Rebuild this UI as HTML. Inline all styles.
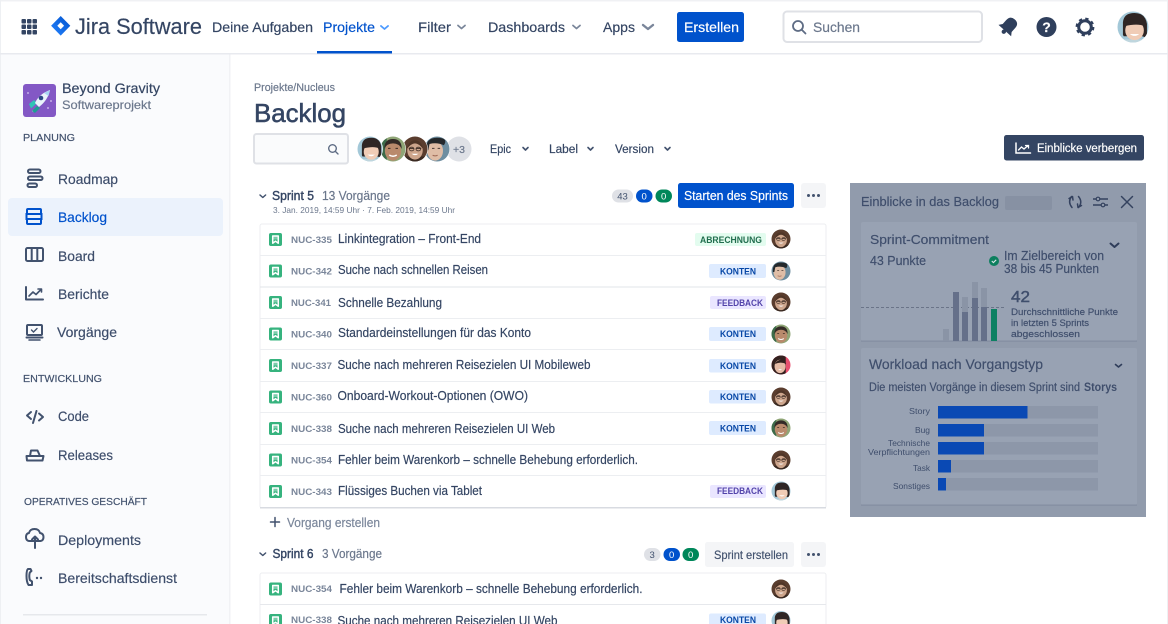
<!DOCTYPE html>
<html lang="de"><head><meta charset="utf-8"><title>Backlog</title>
<style>
html,body{margin:0;padding:0;background:#fff;width:1168px;height:624px;overflow:hidden}
svg{display:block;filter:blur(.25px)}
text{font-family:"Liberation Sans",sans-serif;fill:#344563;stroke:#344563;stroke-width:.18px;white-space:pre}
.n{font-size:14px}
.nv{font-size:14px;fill:#3d4d6b;stroke:#3d4d6b}
.h{font-size:10.5px;fill:#42526e;stroke:#42526e}
.g{fill:#6b778c;stroke:#6b778c}
.k{font-size:9.5px;font-weight:bold;fill:#7a869a;stroke:none}
.t{font-size:12.5px}
.l{font-size:9.5px;font-weight:bold;text-anchor:middle;stroke:none}
.w{fill:#fff;stroke:#fff}
.bl{fill:#0052cc;stroke:#0052cc}
.s{fill:none;stroke:#42526e;stroke-width:2;stroke-linecap:round;stroke-linejoin:round}
.ch{fill:none;stroke:#42526e;stroke-width:1.6;stroke-linecap:round;stroke-linejoin:round}
.p{fill:#3f4e6c;stroke:#3f4e6c}
.ps{font-size:8.5px;text-anchor:end;fill:#3f4e6c;stroke:none}
.b{font-size:9.5px;text-anchor:middle;stroke:none}
.bd{fill:#42526e}
.lg{fill:#0747a6}
.lf{fill:#5243aa}
.lh{fill:#216e4e}
</style></head><body>
<svg width="1168" height="624" viewBox="0 0 1168 624" xmlns="http://www.w3.org/2000/svg">
<defs>
<linearGradient id="jl" x1="0" y1="1" x2="1" y2="0"><stop offset="0" stop-color="#2684ff"/><stop offset="1" stop-color="#0052cc"/></linearGradient>
<clipPath id="cc"><circle cx="0" cy="0" r="10"/></clipPath>
<symbol id="aw" viewBox="-10 -10 20 20" overflow="visible"><g clip-path="url(#cc)"><rect x="-10" y="-10" width="20" height="20" fill="#5a3d2e"/><path d="M-10 6H10V10H-10Z" fill="#3a2a22"/><ellipse cx="0" cy="1" rx="6.200" ry="7.500" fill="#cda58c"/><path d="M-6.500 0Q-5-7 0-7T6.500 0Q3-4.500 0-4.500T-6.500 0Z" fill="#4f3527"/><path d="M-5 -.5H-1M1-.5H5" stroke="#3a2a22" stroke-width=".8"/><ellipse cx="-2.700" cy="0" rx="1.900" ry="1.500" fill="none" stroke="#3a2a22" stroke-width=".6"/><ellipse cx="2.700" cy="0" rx="1.900" ry="1.500" fill="none" stroke="#3a2a22" stroke-width=".6"/><path d="M-2.800 3.800Q0 6 2.800 3.800Z" fill="#fff"/></g></symbol>
<symbol id="am" viewBox="-10 -10 20 20" overflow="visible"><g clip-path="url(#cc)"><rect x="-10" y="-10" width="20" height="20" fill="#6e8ea0"/><ellipse cx="-1.500" cy="1.500" rx="6.300" ry="7.800" fill="#dfbda6"/><path d="M-8.500 1Q-9.500-9 0-9T5.500-3Q0-5.500-6-4L-7 1Z" fill="#24282b"/><path d="M-4-.5H-2M.5-.5H2.500" stroke="#4a3a34" stroke-width=".8"/><path d="M-3.500 5Q-1.500 6 .5 5" stroke="#a06c58" stroke-width=".8" fill="none"/></g></symbol>
<symbol id="ag" viewBox="-10 -10 20 20" overflow="visible"><g clip-path="url(#cc)"><rect x="-10" y="-10" width="20" height="20" fill="#8fa576"/><path d="M-10-10H-5V10H-10Z" fill="#3d6b4a"/><ellipse cx="0" cy="1.500" rx="6.500" ry="7.800" fill="#b98a6c"/><path d="M-7 0Q-7-8 0-8T7 0Q5-4.500 0-4.500T-7 0Z" fill="#332a26"/><path d="M-4-.5H-2M2-.5H4" stroke="#3a2a22" stroke-width=".8"/><path d="M-3 4.800Q0 6.800 3 4.800" stroke="#fff" stroke-width="1.100" fill="none"/></g></symbol>
<symbol id="ap" viewBox="-10 -10 20 20" overflow="visible"><g clip-path="url(#cc)"><rect x="-10" y="-10" width="20" height="20" fill="#e8506f"/><path d="M-10-10H5V10H-10Z" fill="#33211f"/><ellipse cx="-1" cy="1.500" rx="5.800" ry="7" fill="#e6bba6"/><path d="M-6.500-1Q-4-6 3-6L5.500-1Q0-4-6.500-1Z" fill="#33211f"/><path d="M-3 4.500Q-1 6.500 1 4.500Z" fill="#fff"/></g></symbol>
<symbol id="ab" viewBox="-10 -10 20 20" overflow="visible"><g clip-path="url(#cc)"><rect x="-10" y="-10" width="20" height="20" fill="#a3c8d8"/><path d="M-6.500 5V-3Q-6-9 1-9T9-2V7L6 6H-6Z" fill="#2f2625"/><path d="M-10 8H10V10H-10Z" fill="#bfd6de"/><ellipse cx="1" cy="2.200" rx="6" ry="6.300" fill="#f0ccb6"/><path d="M-5.500-.5Q-4-5 1.500-5T7.500-.5Q3-2.500-5.500-.5Z" fill="#2f2625"/><path d="M-2 4.500Q1 7 4 4.500Z" fill="#fff"/></g></symbol>
<symbol id="st" viewBox="0 0 14 14"><rect width="14" height="14" rx="2" fill="#36b37e"/><path d="M4 3.200H10V11L7 8.800 4 11Z" fill="none" stroke="#fff" stroke-width="1.600" stroke-linejoin="round"/><path d="M4 3H10V7H4Z" fill="#fff" opacity=".35"/></symbol>
<symbol id="dots" viewBox="0 0 25 25"><rect width="25" height="25" rx="3" fill="#f4f5f7"/><circle cx="7.500" cy="12.500" r="1.500" fill="#42526e"/><circle cx="12.500" cy="12.500" r="1.500" fill="#42526e"/><circle cx="17.500" cy="12.500" r="1.500" fill="#42526e"/></symbol>
</defs>

<rect width="1168" height="624" fill="#fff"/>
<rect x="0" y="0" width="1168" height="1.500" fill="#f0f1f4"/>
<rect x="0" y="0" width="1" height="624" fill="#eef0f3"/>
<rect x="1167" y="0" width="1" height="624" fill="#eef0f3"/>

<!-- Sidebar -->
<rect x="1" y="54" width="228" height="570" fill="#fafbfd"/>
<rect x="229" y="54" width="1.500" height="570" fill="#f1f2f5"/>
<rect x="0" y="53" width="1168" height="1.500" fill="#e8eaef"/>

<!-- Header -->
<g fill="#344563">
<rect x="21.500" y="19" width="4.500" height="4.500" rx="1"/><rect x="27" y="19" width="4.500" height="4.500" rx="1"/><rect x="32.500" y="19" width="4.500" height="4.500" rx="1"/>
<rect x="21.500" y="24.500" width="4.500" height="4.500" rx="1"/><rect x="27" y="24.500" width="4.500" height="4.500" rx="1"/><rect x="32.500" y="24.500" width="4.500" height="4.500" rx="1"/>
<rect x="21.500" y="30" width="4.500" height="4.500" rx="1"/><rect x="27" y="30" width="4.500" height="4.500" rx="1"/><rect x="32.500" y="30" width="4.500" height="4.500" rx="1"/>
</g>
<path d="M60.700 16L70.300 25.800 60.700 35.600 51.100 25.800Z" fill="url(#jl)"/>
<path d="M60.700 22.300L64.100 25.800 60.700 29.300 57.300 25.800Z" fill="#fff"/>
<text x="75" y="34" font-size="22" textLength="127" lengthAdjust="spacingAndGlyphs">Jira Software</text>
<text class="n" x="212" y="32" textLength="101" lengthAdjust="spacingAndGlyphs">Deine Aufgaben</text>
<text class="n bl" x="323" y="32" textLength="52" lengthAdjust="spacingAndGlyphs">Projekte</text>
<path d="M381 26l3.500 3 3.500-3" fill="none" stroke="#4c9aff" stroke-width="1.800" stroke-linecap="round" stroke-linejoin="round"/>
<rect x="317" y="51" width="75" height="2.500" fill="#0052cc"/>
<text class="n" x="418" y="32" textLength="33" lengthAdjust="spacingAndGlyphs">Filter</text>
<path d="M458 25.500l3.500 3 3.500-3" fill="none" stroke="#7a869a" stroke-width="1.800" stroke-linecap="round" stroke-linejoin="round"/>
<text class="n" x="488" y="32" textLength="77" lengthAdjust="spacingAndGlyphs">Dashboards</text>
<path d="M573 25.500l3.500 3 3.500-3" fill="none" stroke="#7a869a" stroke-width="1.800" stroke-linecap="round" stroke-linejoin="round"/>
<text class="n" x="603" y="32" textLength="32" lengthAdjust="spacingAndGlyphs">Apps</text>
<path d="M643 25l5 4 5-4" fill="none" stroke="#7a869a" stroke-width="2.400" stroke-linecap="round" stroke-linejoin="round"/>
<rect x="677" y="12" width="67" height="30" rx="2.500" fill="#0052cc"/>
<text class="n w" x="684" y="32" textLength="55" lengthAdjust="spacingAndGlyphs">Erstellen</text>
<rect x="783.500" y="11.500" width="198.500" height="30.500" rx="3.500" fill="#fff" stroke="#dfe1e6" stroke-width="2"/>
<circle cx="798" cy="26" r="5" fill="none" stroke="#5e6c84" stroke-width="1.800"/><path d="M802 30l3.500 3.500" stroke="#5e6c84" stroke-width="1.800" stroke-linecap="round"/>
<text class="n g" x="813" y="32" textLength="47" lengthAdjust="spacingAndGlyphs">Suchen</text>
<!-- bell -->
<g transform="rotate(42 1008.500 26.500)" fill="#2f3f5c"><path d="M1008.500 17Q1014.500 17 1014.500 23.500V28.500L1017 32H1000L1002.500 28.500V23.500Q1002.500 17 1008.500 17Z"/><circle cx="1008.500" cy="33.500" r="2.200"/></g>
<circle cx="1046.500" cy="27" r="10" fill="#2f3f5c"/>
<text class="w" x="1046.500" y="32" font-size="14" font-weight="bold" text-anchor="middle">?</text>
<circle cx="1085" cy="27" r="6.300" fill="none" stroke="#2f3f5c" stroke-width="3"/>
<circle cx="1085" cy="27" r="8.300" fill="none" stroke="#2f3f5c" stroke-width="2.200" stroke-dasharray="3.300 3.220"/>
<use href="#ab" x="1117.500" y="11.500" width="31" height="31"/>

<!-- Sidebar content -->
<rect x="23" y="84" width="33" height="33" rx="3" fill="#8358c5"/>
<g fill="#d9c8f2"><circle cx="28" cy="93" r=".9"/><circle cx="48" cy="108" r=".9"/><circle cx="33" cy="111" r=".9"/><circle cx="51" cy="101" r=".9"/></g>
<path d="M29 104l5-4 3 3-6 5.500z" fill="#2ec4b6"/><path d="M32 111l5-5 3 2-5 5z" fill="#1d9c93"/>
<path d="M35 103Q39 94 50 90 48 100 39 107Z" fill="#e9f3fb"/>
<path d="M44 93L50 90 48.500 96Z" fill="#a8d5f2"/>
<circle cx="41" cy="98" r="2.300" fill="#2d4a86"/>
<text x="62" y="93" font-size="14" textLength="98" lengthAdjust="spacingAndGlyphs">Beyond Gravity</text>
<text x="62" y="109" font-size="12" textLength="89" lengthAdjust="spacingAndGlyphs" class="g">Softwareprojekt</text>
<text class="h" x="23" y="141" textLength="52" lengthAdjust="spacingAndGlyphs">PLANUNG</text>

<rect x="8" y="198" width="215" height="38" rx="4" fill="#ebf2fc"/>
<!-- roadmap -->
<g class="s"><rect x="28" y="169.500" width="12.500" height="3.500" rx="1.750"/><rect x="28" y="176.500" width="14.500" height="3.500" rx="1.750"/><rect x="27.500" y="183.500" width="9.500" height="3.500" rx="1.750"/></g>
<text class="nv" x="58" y="184" textLength="60" lengthAdjust="spacingAndGlyphs">Roadmap</text>
<!-- backlog -->
<g fill="none" stroke="#0052cc" stroke-width="2"><rect x="27" y="209" width="14" height="5" rx="1"/><rect x="26.500" y="214" width="15" height="5"/><rect x="27" y="219" width="14" height="5" rx="1"/></g>
<text class="n bl" x="58" y="222" textLength="49" lengthAdjust="spacingAndGlyphs">Backlog</text>
<!-- board -->
<g fill="none" stroke="#42526e" stroke-width="2"><rect x="26" y="248" width="17" height="13" rx="1.500"/><path d="M31.700 248V261M37.300 248V261"/></g>
<text class="nv" x="58" y="261" textLength="37" lengthAdjust="spacingAndGlyphs">Board</text>
<!-- berichte -->
<path class="s" d="M26 287V299.500H43"/><path d="M29 296l4-4 3 2.500 5-5M38 289h3.500v3" fill="none" stroke="#42526e" stroke-width="1.600" stroke-linecap="round" stroke-linejoin="round"/>
<text class="nv" x="58" y="299" textLength="51" lengthAdjust="spacingAndGlyphs">Berichte</text>
<!-- vorgaenge -->
<g fill="none" stroke="#42526e" stroke-width="2" stroke-linecap="round"><rect x="27" y="325" width="15" height="10" rx="1"/><path d="M26.500 337.500H42.500"/></g><path d="M29 340H40" stroke="#42526e" stroke-width="1.500" stroke-linecap="round"/><path d="M31.500 330l2 2 3.500-3.500" fill="none" stroke="#42526e" stroke-width="1.400" stroke-linecap="round"/>
<text class="nv" x="57" y="337" textLength="60" lengthAdjust="spacingAndGlyphs">Vorgänge</text>
<text class="h" x="23" y="382" textLength="79" lengthAdjust="spacingAndGlyphs">ENTWICKLUNG</text>
<!-- code -->
<path class="s" d="M31 412l-4 3.500 4 3.500M39 413.500l4 3.500-4 3.500M36.500 411l-3.500 12"/>
<text class="nv" x="58" y="421" textLength="31" lengthAdjust="spacingAndGlyphs">Code</text>
<!-- releases -->
<path class="s" d="M26.500 456H43.500L42.500 460.500H27ZM30 456L31 450.500H37.500L40 456"/>
<text class="nv" x="58" y="460" textLength="55" lengthAdjust="spacingAndGlyphs">Releases</text>
<text class="h" x="24" y="505" textLength="123" lengthAdjust="spacingAndGlyphs">OPERATIVES GESCHÄFT</text>
<!-- deployments -->
<path class="s" d="M29.500 541H29Q26 540.500 26 537T29 533Q30 529 34.500 529T40 533Q43.500 533.500 43.500 537T40.500 541Z"/><path d="M35 548V536.500M32 539.500l3-3 3 3" fill="none" stroke="#42526e" stroke-width="2" stroke-linecap="round" stroke-linejoin="round"/>
<text class="nv" x="58" y="545" textLength="83" lengthAdjust="spacingAndGlyphs">Deployments</text>
<!-- bereitschaftsdienst -->
<path class="s" d="M30.500 569H28Q26.500 570 26.500 576T28.500 585H32V581.500L29.800 580Q28.800 576 29.800 572.500L31.500 571Z"/><circle cx="37" cy="578" r="1.200" fill="#42526e"/><circle cx="41" cy="578" r="1.200" fill="#42526e"/>
<text class="nv" x="58" y="583" textLength="119" lengthAdjust="spacingAndGlyphs">Bereitschaftsdienst</text>
<rect x="23" y="614" width="184" height="1.500" fill="#e6e8ec"/>

<!-- Main head -->
<text x="254" y="91" font-size="11" textLength="81" lengthAdjust="spacingAndGlyphs" class="g">Projekte/Nucleus</text>
<text x="254" y="122" font-size="26" textLength="92" lengthAdjust="spacingAndGlyphs" style="stroke-width:.55px">Backlog</text>
<rect x="254" y="134" width="94" height="29.500" rx="2.500" fill="#fafbfc" stroke="#dfe1e6" stroke-width="2"/>
<circle cx="332.500" cy="148.500" r="3.800" fill="none" stroke="#5e6c84" stroke-width="1.400"/><path d="M335.500 151.500l2.500 2.500" stroke="#5e6c84" stroke-width="1.400" stroke-linecap="round"/>

<circle cx="459" cy="149" r="12.500" fill="#dfe1e6"/>
<text x="459" y="153" font-size="10.500" text-anchor="middle" class="g">+3</text>
<circle cx="437" cy="149" r="13" fill="#fff"/><use href="#am" x="424.500" y="136.500" width="25" height="25"/>
<circle cx="415" cy="149" r="13" fill="#fff"/><use href="#aw" x="402.500" y="136.500" width="25" height="25"/>
<circle cx="393" cy="149" r="13" fill="#fff"/><use href="#ag" x="380.500" y="136.500" width="25" height="25"/>
<circle cx="370" cy="149" r="13" fill="#fff"/><use href="#ab" x="357.500" y="136.500" width="25" height="25"/>

<text x="490" y="153" font-size="11.500" textLength="21" lengthAdjust="spacingAndGlyphs">Epic</text>
<path class="ch" d="M523 147.500l2.500 2.500 2.500-2.500"/>
<text x="549" y="153" font-size="11.500" textLength="29" lengthAdjust="spacingAndGlyphs">Label</text>
<path class="ch" d="M588 147.500l2.500 2.500 2.500-2.500"/>
<text x="615" y="153" font-size="11.500" textLength="39" lengthAdjust="spacingAndGlyphs">Version</text>
<path class="ch" d="M665 147.500l2.500 2.500 2.500-2.500"/>

<rect x="1004" y="135" width="140" height="25.500" rx="2.500" fill="#344563"/>
<path d="M1016 143V153H1030.500" fill="none" stroke="#fff" stroke-width="1.500" stroke-linecap="round"/>
<path d="M1018.500 150l3-3 2.500 2 4-3.500M1025.500 145.500h3v2.500" fill="none" stroke="#fff" stroke-width="1.300" stroke-linecap="round"/>
<text class="w" x="1037" y="152" font-size="11.500" textLength="100" lengthAdjust="spacingAndGlyphs">Einblicke verbergen</text>

<!-- Sprint 5 head -->
<path d="M260 195l2.800 2.500 2.800-2.500" fill="none" stroke="#42526e" stroke-width="1.500" stroke-linecap="round" stroke-linejoin="round"/>
<text x="272" y="200" font-size="12.500" textLength="42" lengthAdjust="spacingAndGlyphs" style="stroke-width:.4px">Sprint 5</text>
<text x="322" y="200" font-size="12.500" textLength="68" lengthAdjust="spacingAndGlyphs" class="g">13 Vorgänge</text>
<text x="273" y="213" font-size="8.500" textLength="182" lengthAdjust="spacingAndGlyphs" class="g" style="stroke-width:0">3. Jan. 2019, 14:59 Uhr · 7. Feb. 2019, 14:59 Uhr</text>
<rect x="612" y="189.500" width="21" height="13" rx="6.500" fill="#dfe1e6"/><text class="b bd" x="622.500" y="199.500">43</text>
<rect x="636" y="189.500" width="16.500" height="13" rx="6.500" fill="#0052cc"/><text class="b" x="644.200" y="199.500" style="fill:#fff">0</text>
<rect x="655.500" y="189.500" width="16.500" height="13" rx="6.500" fill="#00875a"/><text class="b" x="663.700" y="199.500" style="fill:#fff">0</text>
<rect x="678" y="183" width="116" height="25" rx="2.500" fill="#0052cc"/>
<text class="w" x="684" y="200" font-size="12.500" textLength="104" lengthAdjust="spacingAndGlyphs">Starten des Sprints</text>
<use href="#dots" x="801" y="183" width="25" height="25"/>

<!-- List 1 -->
<rect x="260" y="224" width="566" height="284" rx="2" fill="#fff" stroke="#eceef1"/>
<g fill="#eceef1">
<rect x="260" y="255" width="566" height="1"/>
<rect x="260" y="286.500" width="566" height="1" fill="#e2e4e9"/>
<rect x="260" y="318" width="566" height="1"/>
<rect x="260" y="349" width="566" height="1"/>
<rect x="260" y="381" width="566" height="1"/>
<rect x="260" y="412" width="566" height="1"/>
<rect x="260" y="444" width="566" height="1"/>
<rect x="260" y="475" width="566" height="1"/>
</g>
<rect x="260" y="507" width="566" height="1.500" fill="#d8dbe1"/>

<use href="#st" x="269" y="233" width="13" height="13"/>
<use href="#st" x="269" y="264.500" width="13" height="13"/>
<use href="#st" x="269" y="296" width="13" height="13"/>
<use href="#st" x="269" y="327.500" width="13" height="13"/>
<use href="#st" x="269" y="359" width="13" height="13"/>
<use href="#st" x="269" y="390.500" width="13" height="13"/>
<use href="#st" x="269" y="422" width="13" height="13"/>
<use href="#st" x="269" y="453.500" width="13" height="13"/>
<use href="#st" x="269" y="485" width="13" height="13"/>

<text class="k" x="291" y="243" textLength="41" lengthAdjust="spacingAndGlyphs">NUC-335</text>
<text class="k" x="291" y="274.500" textLength="41" lengthAdjust="spacingAndGlyphs">NUC-342</text>
<text class="k" x="291" y="306" textLength="40" lengthAdjust="spacingAndGlyphs">NUC-341</text>
<text class="k" x="291" y="337.500" textLength="41" lengthAdjust="spacingAndGlyphs">NUC-340</text>
<text class="k" x="291" y="369" textLength="41" lengthAdjust="spacingAndGlyphs">NUC-337</text>
<text class="k" x="291" y="400.500" textLength="41" lengthAdjust="spacingAndGlyphs">NUC-360</text>
<text class="k" x="291" y="432" textLength="41" lengthAdjust="spacingAndGlyphs">NUC-338</text>
<text class="k" x="291" y="463.500" textLength="41" lengthAdjust="spacingAndGlyphs">NUC-354</text>
<text class="k" x="291" y="495" textLength="41" lengthAdjust="spacingAndGlyphs">NUC-343</text>

<text class="t" x="338" y="243" textLength="143" lengthAdjust="spacingAndGlyphs">Linkintegration – Front-End</text>
<text class="t" x="338" y="274" textLength="150" lengthAdjust="spacingAndGlyphs">Suche nach schnellen Reisen</text>
<text class="t" x="338" y="307" textLength="104" lengthAdjust="spacingAndGlyphs">Schnelle Bezahlung</text>
<text class="t" x="338" y="337" textLength="193" lengthAdjust="spacingAndGlyphs">Standardeinstellungen für das Konto</text>
<text class="t" x="337.500" y="369" textLength="253" lengthAdjust="spacingAndGlyphs">Suche nach mehreren Reisezielen UI Mobileweb</text>
<text class="t" x="337.500" y="400" textLength="190.500" lengthAdjust="spacingAndGlyphs">Onboard-Workout-Optionen (OWO)</text>
<text class="t" x="338" y="433" textLength="217" lengthAdjust="spacingAndGlyphs">Suche nach mehreren Reisezielen UI Web</text>
<text class="t" x="338" y="464" textLength="300" lengthAdjust="spacingAndGlyphs">Fehler beim Warenkorb – schnelle Behebung erforderlich.</text>
<text class="t" x="338" y="495" textLength="144" lengthAdjust="spacingAndGlyphs">Flüssiges Buchen via Tablet</text>

<rect x="695" y="233" width="71" height="13" rx="2" fill="#e3fcef"/>
<text class="l lh" x="731" y="243" textLength="62" lengthAdjust="spacingAndGlyphs">ABRECHNUNG</text>
<rect x="709" y="264" width="57" height="14" rx="2" fill="#deebff"/>
<text class="l lg" x="738" y="274.500" textLength="36" lengthAdjust="spacingAndGlyphs">KONTEN</text>
<rect x="710" y="296" width="56" height="13" rx="2" fill="#eae6ff"/>
<text class="l lf" x="740" y="306" textLength="46" lengthAdjust="spacingAndGlyphs">FEEDBACK</text>
<rect x="709" y="327" width="57" height="14" rx="2" fill="#deebff"/>
<text class="l lg" x="738" y="337" textLength="36" lengthAdjust="spacingAndGlyphs">KONTEN</text>
<rect x="709" y="359" width="57" height="13.500" rx="2" fill="#deebff"/>
<text class="l lg" x="738" y="369" textLength="36" lengthAdjust="spacingAndGlyphs">KONTEN</text>
<rect x="709" y="390" width="57" height="13.500" rx="2" fill="#deebff"/>
<text class="l lg" x="738" y="400" textLength="36" lengthAdjust="spacingAndGlyphs">KONTEN</text>
<rect x="709" y="421" width="57" height="14" rx="2" fill="#deebff"/>
<text class="l lg" x="738" y="431.500" textLength="36" lengthAdjust="spacingAndGlyphs">KONTEN</text>
<rect x="710" y="485" width="56" height="13" rx="2" fill="#eae6ff"/>
<text class="l lf" x="740" y="494" textLength="46" lengthAdjust="spacingAndGlyphs">FEEDBACK</text>

<use href="#aw" x="771.500" y="229.500" width="19" height="19"/>
<use href="#am" x="771.500" y="261.500" width="19" height="19"/>
<use href="#aw" x="771.500" y="292.500" width="19" height="19"/>
<use href="#ag" x="771.500" y="324.500" width="19" height="19"/>
<use href="#ap" x="771.500" y="355.500" width="19" height="19"/>
<use href="#aw" x="771.500" y="387.500" width="19" height="19"/>
<use href="#ag" x="771.500" y="418.500" width="19" height="19"/>
<use href="#aw" x="771.500" y="450.500" width="19" height="19"/>
<use href="#ab" x="771.500" y="481.500" width="19" height="19"/>

<path d="M275 517.500V526.500M270.500 522H279.500" stroke="#42526e" stroke-width="1.500" stroke-linecap="round"/>
<text x="287" y="527" font-size="12.500" textLength="93" lengthAdjust="spacingAndGlyphs" style="fill:#7a869a;stroke:#7a869a">Vorgang erstellen</text>

<!-- Sprint 6 -->
<path d="M260 553l2.800 2.500 2.800-2.500" fill="none" stroke="#42526e" stroke-width="1.500" stroke-linecap="round" stroke-linejoin="round"/>
<text x="272.500" y="558" font-size="12.500" textLength="41" lengthAdjust="spacingAndGlyphs" style="stroke-width:.4px">Sprint 6</text>
<text x="322" y="558" font-size="12.500" textLength="60" lengthAdjust="spacingAndGlyphs" class="g">3 Vorgänge</text>
<rect x="644" y="548" width="16.500" height="13" rx="6.500" fill="#dfe1e6"/><text class="b bd" x="652.200" y="558">3</text>
<rect x="663.500" y="548" width="16.500" height="13" rx="6.500" fill="#0052cc"/><text class="b" x="671.700" y="558" style="fill:#fff">0</text>
<rect x="682.500" y="548" width="16.500" height="13" rx="6.500" fill="#00875a"/><text class="b" x="690.700" y="558" style="fill:#fff">0</text>
<rect x="705" y="542" width="89" height="25" rx="2.500" fill="#f4f5f7"/>
<text x="714" y="559" font-size="12" textLength="74" lengthAdjust="spacingAndGlyphs" style="fill:#42526e;stroke:#42526e">Sprint erstellen</text>
<use href="#dots" x="801" y="542" width="25" height="25"/>

<rect x="260" y="573" width="566" height="60" rx="2" fill="#fff" stroke="#eceef1"/>
<rect x="260" y="604" width="566" height="1" fill="#e6e8ec"/>
<use href="#st" x="269" y="582.500" width="13" height="13"/>
<use href="#st" x="269" y="614" width="13" height="13"/>
<text class="k" x="291" y="592" textLength="41" lengthAdjust="spacingAndGlyphs">NUC-354</text>
<text class="k" x="291" y="623" textLength="41" lengthAdjust="spacingAndGlyphs">NUC-338</text>
<text class="t" x="339.500" y="593" textLength="303" lengthAdjust="spacingAndGlyphs">Fehler beim Warenkorb – schnelle Behebung erforderlich.</text>
<text class="t" x="337.500" y="625" textLength="220" lengthAdjust="spacingAndGlyphs">Suche nach mehreren Reisezielen UI Web</text>
<rect x="709" y="613.500" width="57" height="14" rx="2" fill="#deebff"/>
<text class="l lg" x="738" y="623" textLength="36" lengthAdjust="spacingAndGlyphs">KONTEN</text>
<use href="#aw" x="771.500" y="579.500" width="19" height="19"/>
<use href="#ab" x="771.500" y="611" width="19" height="19"/>

<!-- Insights panel -->
<rect x="850" y="183" width="296" height="334" fill="#919bac"/>
<text class="p" x="861" y="206" font-size="13" textLength="138" lengthAdjust="spacingAndGlyphs">Einblicke in das Backlog</text>
<rect x="1005" y="196" width="47" height="14" rx="2" fill="#8791a3"/>
<path d="M1071.500 196.500Q1067.500 202 1072 207.500M1069 198.500L1072.500 196.500 1073 200M1078.500 196.500Q1083 202 1078.500 207.500M1081.500 205.500L1078 207.500 1077.500 204" fill="none" stroke="#34425f" stroke-width="1.500" stroke-linecap="round" stroke-linejoin="round"/>
<path d="M1093 199H1108M1093 205H1108" stroke="#34425f" stroke-width="1.400"/><circle cx="1098" cy="199" r="1.800" fill="#919bac" stroke="#34425f" stroke-width="1.200"/><circle cx="1103" cy="205" r="1.800" fill="#919bac" stroke="#34425f" stroke-width="1.200"/>
<path d="M1121.500 196.500L1132.500 207.500M1132.500 196.500L1121.500 207.500" stroke="#34425f" stroke-width="1.500" stroke-linecap="round"/>

<rect x="861" y="222" width="276" height="119" rx="2" fill="#98a2b3"/>
<rect x="861" y="340.500" width="276" height="1.200" fill="#838da0"/>
<text class="p" x="870" y="244" font-size="13" textLength="119" lengthAdjust="spacingAndGlyphs">Sprint-Commitment</text>
<path d="M1110.500 243.500l4 3.500 4-3.500" fill="none" stroke="#2f3d5a" stroke-width="2" stroke-linecap="round" stroke-linejoin="round"/>
<text class="p" x="870" y="265" font-size="12.500" textLength="56" lengthAdjust="spacingAndGlyphs">43 Punkte</text>
<circle cx="994" cy="261" r="5" fill="#0c7f5e"/><path d="M991.800 261l1.600 1.600 2.800-2.800" fill="none" stroke="#dfe5e8" stroke-width="1.100"/>
<text class="p" x="1004" y="260" font-size="12.500" textLength="100" lengthAdjust="spacingAndGlyphs">Im Zielbereich von</text>
<text class="p" x="1004" y="273" font-size="12.500" textLength="95" lengthAdjust="spacingAndGlyphs">38 bis 45 Punkten</text>
<path d="M861 307.500H1004" stroke="#6a7488" stroke-dasharray="3 2"/>
<g fill="#8a94a6"><rect x="943" y="329" width="6" height="12"/><rect x="962" y="297" width="6" height="44"/><rect x="972" y="282" width="6" height="59"/><rect x="981" y="288" width="6" height="53"/></g>
<g fill="#65708a"><rect x="953" y="292" width="6" height="49"/><rect x="962" y="312" width="6" height="29"/><rect x="972" y="298" width="6" height="43"/><rect x="981" y="307" width="6" height="34"/></g>
<rect x="991" y="309" width="6" height="32" fill="#0d8062"/>
<text class="p" x="1011" y="302" font-size="16" textLength="19" lengthAdjust="spacingAndGlyphs" style="stroke-width:.45px">42</text>
<text class="p" x="1011" y="315" font-size="9.500" textLength="107" lengthAdjust="spacingAndGlyphs">Durchschnittliche Punkte</text>
<text class="p" x="1011" y="326" font-size="9.500" textLength="78" lengthAdjust="spacingAndGlyphs">in letzten 5 Sprints</text>
<text class="p" x="1011" y="337" font-size="9.500" textLength="69" lengthAdjust="spacingAndGlyphs">abgeschlossen</text>

<rect x="861" y="348" width="276" height="157" rx="2" fill="#98a2b3"/>
<rect x="861" y="504.500" width="276" height="1.200" fill="#838da0"/>
<text class="p" x="869" y="369" font-size="14" textLength="174" lengthAdjust="spacingAndGlyphs">Workload nach Vorgangstyp</text>
<path d="M1115.500 364.500l3 2.500 3-2.500" fill="none" stroke="#2f3d5a" stroke-width="1.600" stroke-linecap="round" stroke-linejoin="round"/>
<text class="p" x="869" y="391" font-size="11.500" textLength="211" lengthAdjust="spacingAndGlyphs">Die meisten Vorgänge in diesem Sprint sind</text>
<text class="p" x="1084" y="391" font-size="11.500" font-weight="bold" textLength="33" lengthAdjust="spacingAndGlyphs" style="stroke:none">Storys</text>
<g fill="#8d97a9">
<rect x="938" y="406" width="160" height="12.500"/><rect x="938" y="424" width="160" height="12.500"/><rect x="938" y="442" width="160" height="12.500"/><rect x="938" y="460" width="160" height="12.500"/><rect x="938" y="478" width="160" height="12.500"/>
</g>
<g fill="#0a49b4">
<rect x="938" y="406" width="89.500" height="12.500"/><rect x="938" y="424" width="46" height="12.500"/><rect x="938" y="442" width="46" height="12.500"/><rect x="938" y="460" width="13" height="12.500"/><rect x="938" y="478" width="8" height="12.500"/>
</g>
<text class="ps" x="930" y="414" textLength="21" lengthAdjust="spacingAndGlyphs">Story</text>
<text class="ps" x="930" y="433" textLength="15" lengthAdjust="spacingAndGlyphs">Bug</text>
<text class="ps" x="930" y="446" textLength="42" lengthAdjust="spacingAndGlyphs">Technische</text>
<text class="ps" x="930" y="455" textLength="62" lengthAdjust="spacingAndGlyphs">Verpflichtungen</text>
<text class="ps" x="930" y="471" textLength="17" lengthAdjust="spacingAndGlyphs">Task</text>
<text class="ps" x="930" y="489" textLength="37" lengthAdjust="spacingAndGlyphs">Sonstiges</text>
</svg>
</body></html>
